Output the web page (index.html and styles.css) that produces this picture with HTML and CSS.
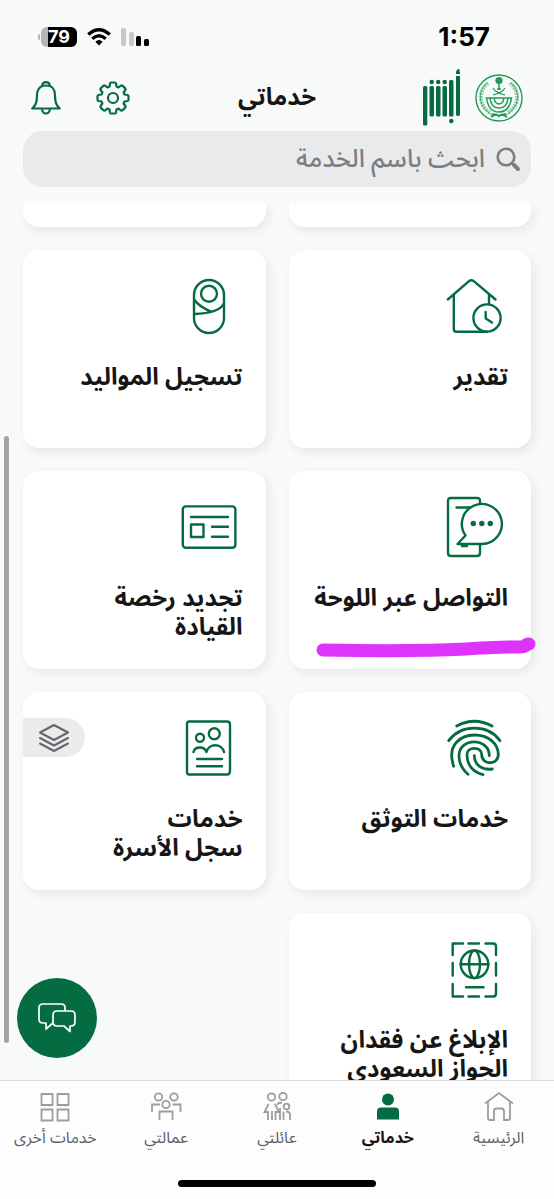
FILE: index.html
```html
<!DOCTYPE html>
<html lang="ar" dir="rtl">
<head>
<meta charset="utf-8">
<meta name="viewport" content="width=device-width, initial-scale=1">
<title>خدماتي</title>
<link rel="stylesheet" href="styles.css">
</head>
<body>
<div class="status">
  <span class="clock">1:57</span>
  <div class="status-icons">
    <svg width="28" height="18" viewBox="0 0 28 18" aria-hidden="true"><rect x="0" y="0" width="5" height="18" rx="2" fill="#c8c8c8"/><rect x="8" y="4" width="5" height="14" rx="2" fill="#c8c8c8"/><rect x="15" y="8" width="5" height="10" rx="1.500" fill="#000"/><rect x="23" y="11" width="5" height="7" rx="1.500" fill="#000"/></svg>
    <svg width="24" height="18" viewBox="0 0 24 18" fill="none" stroke="#000" stroke-width="3.400" aria-hidden="true"><path d="M1.300 6.600Q12-3.200 22.700 6.600M5.300 10.700Q12 4.700 18.700 10.700"/><path d="M8.300 13.700Q12 10.300 15.700 13.700L12 17.500z" fill="#000" stroke="none"/></svg>
    <div class="battery"><span>79</span></div>
  </div>
</div>
<header class="header">
  <div class="brand">
    <svg width="48" height="48" viewBox="0 0 48 48" fill="none" stroke="#1f9a58" aria-hidden="true">
      <circle cx="24" cy="24" r="23" stroke-width="1.400"/>
      <path d="M13 9C3 17 3 32 16 39M35 9c10 8 10 23-3 30" stroke-width="4" stroke="#8fceac" stroke-dasharray="2 1"/>
      <path d="M12 9C2 17 3 33 17 41M36 9c10 8 9 24-5 32" stroke-width=".8"/>
      <path d="M24 6v9M22 15h4" stroke-width="1.500"/><circle cx="24" cy="6.500" r="3.600" fill="#1f9a58" stroke="none"/>
      <path d="M18 14q3 5 12 7M30 14q-3 5-12 7" stroke-width="1.200"/>
      <path d="M11.500 24q2 14 12.500 14T36.500 24zM15 24q1 10 9 10t9-10M19 24q1 6 5 6t5-6" stroke-width="1.500"/>
      <path d="M16 43q5-4 8-1 3-3 8 1M17 40l5 1M31 40l-5 1" stroke-width="2"/>
    </svg>
    <svg width="38" height="58" viewBox="0 0 38 58" fill="#056c42" aria-hidden="true">
      <path d="M33 7h4v38.500q0 1.500-2 1.500t-2-1.500zM33 4q0-4 3.500-4 .5 1.500-.5 2.500h1V5h-4z"/>
      <rect x="26" y="11" width="4.500" height="36.500" rx="1.500"/><circle cx="28.300" cy="52" r="2.200"/>
      <rect x="19.500" y="17" width="4.500" height="30.500" rx="1.500"/><rect x="13" y="17" width="4.500" height="30.500" rx="1.500"/><rect x="6.500" y="17" width="4.500" height="30.500" rx="1.500"/><rect x="0" y="17" width="4.300" height="39.500" rx="1.500"/>
      <circle cx="8.700" cy="13" r="2.200"/><circle cx="15.200" cy="13" r="2.200"/><circle cx="21.700" cy="13" r="2.200"/>
    </svg>
  </div>
  <h1 class="page-title">خدماتي</h1>
  <div class="actions">
    <button class="icon-btn" aria-label="الإعدادات"><svg width="34" height="34" viewBox="0 0 34 34" fill="none" stroke="#056c42" stroke-width="2.200" stroke-linejoin="round"><circle cx="17" cy="17" r="5"/><path d="M13.500 5.500 14 2.500q.2-1 1.200-1h3.600q1 0 1.200 1l.5 3 2 .9 2.500-1.800q.8-.6 1.600.2l2.600 2.600q.8.800.2 1.600l-1.800 2.500.9 2 3 .5q1 .2 1 1.200v3.600q0 1-1 1.200l-3 .5-.9 2 1.800 2.500q.6.800-.2 1.600l-2.600 2.600q-.8.800-1.600.2l-2.500-1.800-2 .9-.5 3q-.2 1-1.200 1h-3.600q-1 0-1.200-1l-.5-3-2-.9L9 29.400q-.8.600-1.600-.2l-2.600-2.600q-.8-.8-.2-1.600l1.800-2.500-.9-2-3-.5q-1-.2-1-1.200v-3.600q0-1 1-1.200l3-.5.9-2L4.600 9q-.6-.8.200-1.600l2.600-2.600q.8-.8 1.600-.2l2.500 1.800z"/></svg></button>
    <button class="icon-btn" aria-label="التنبيهات"><svg width="30" height="34" viewBox="0 0 30 34" fill="none" stroke="#056c42" stroke-width="2.200" stroke-linejoin="round"><path d="M15 4.500C8.500 4.500 6 9 6 14c0 7-1 10-4.800 13.500h27.600C25 24 24 21 24 14c0-5-2.500-9.500-9-9.500z"/><path d="M11 5.200q.5-4 4-4t4 4M11 28q.5 4.500 4 4.500t4-4.500"/></svg></button>
  </div>
</header>
<label class="search">
  <svg width="24" height="24" viewBox="0 0 24 24" fill="none" stroke="#7c7e80" aria-hidden="true"><circle cx="10" cy="10" r="8.300" stroke-width="2.600"/><path d="M15.500 15.500 18 18" stroke-width="2.500"/><path d="M18 18l4 4" stroke-width="4" stroke-linecap="round"/></svg>
  <input type="search" placeholder="ابحث باسم الخدمة" aria-label="ابحث باسم الخدمة">
</label>
<main class="content">
  <div class="grid">
    <div class="card card-end"></div>
    <div class="card card-end"></div>

    <a class="card" href="#">
      <svg class="card-icon" viewBox="0 0 56 56"><path d="M.8 21.500 22 3.200q2.400-2 4.800 0L48.500 21.500M6.800 17v34q0 2.700 2.700 2.700H40M42 17v9"/><circle cx="40" cy="40" r="13.600"/><path d="M38.700 34v6.500l6.300 4"/></svg>
      <h2>تقدير</h2>
    </a>
    <a class="card" href="#">
      <svg class="card-icon" viewBox="0 0 56 56"><rect x="12" y="2" width="30" height="53" rx="15"/><circle cx="27" cy="15.700" r="8"/><path d="M12.500 22q4 6 16.500 11.700M41.500 26Q37 35 12.500 36"/></svg>
      <h2>تسجيل المواليد</h2>
    </a>
    <a class="card" href="#">
      <svg class="card-icon" viewBox="0 0 56 56"><path d="M33 4.500V2q0-3-3-3H4Q1-1 1 2v52q0 3 3 3h26q3 0 3-3v-9M9.500 8.500H23M15 47h5"/><path d="M18.500 36.500A20 20 0 1 1 35 45H10.500z"/><g class="dots"><circle cx="26.300" cy="24.500" r="2.700"/><circle cx="34.800" cy="24.500" r="2.700"/><circle cx="43.300" cy="24.500" r="2.700"/></g></svg>
      <h2>التواصل عبر اللوحة</h2>
      <svg class="marker" viewBox="0 0 220 20" aria-hidden="true"><path d="M7 13C60 14 110 14 150 12S185 10 200 10 207 7 213 7"/></svg>
    </a>
    <a class="card" href="#">
      <svg class="card-icon" viewBox="0 0 56 56"><rect x=".8" y="7.400" width="52.600" height="41.400" rx="3"/><path d="M9 18h37M30 27.800h16M30 37.700h16"/><rect x="9" y="25.500" width="12.500" height="12.500"/></svg>
      <h2>تجديد رخصة<br>القيادة</h2>
    </a>
    <a class="card" href="#">
      <svg class="card-icon finger" viewBox="0 0 56 56"><path d="M9.700 6Q27.300-3.500 45 6M1.700 20.700C14 4 41 4 53 20.700M6.700 46.300C-1 24 15 15 27.300 15 42 15 51.300 24 51.300 34.500c0 11-16.600 11-16.600 0 0-8.200-14.700-8.200-14.700 0C20 45 26 52.500 36 54.700M21 54.300C15 49 12 43 12 35.700c0-18.500 30.300-18.500 30.300 0M27.300 35.700C27.500 45 35 50.500 45.300 49"/></svg>
      <h2>خدمات التوثق</h2>
    </a>
    <a class="card" href="#">
      <svg class="card-icon" viewBox="0 0 56 56"><path d="M7 1.500h38q3 0 3 3V51q0 3.500-3 3.500H7Q5 54.500 5 52.500v-49Q5 1.500 7 1.500z"/><circle cx="18" cy="17.700" r="4"/><circle cx="32.300" cy="13.700" r="5.500"/><path d="M11.500 32c1.500-6 11-6 13 0 2-9 15.500-9 17.500 0M15 39h25M15 46.300h25"/></svg>
      <h2>خدمات<br>سجل الأسرة</h2>
      <span class="group-tag"><svg width="32" height="30" viewBox="0 0 32 30" fill="none" stroke="#65676a" stroke-width="2" stroke-linejoin="round" stroke-linecap="round" aria-hidden="true"><path d="M16 2 30 9.500 16 17 2 9.500zM2 15l14 7.500L30 15M2 20.500 16 28l14-7.500"/></svg></span>
    </a>
    <a class="card" href="#">
      <svg class="card-icon" viewBox="0 0 56 56"><path d="M5.700 14V2.500H16M21.500 2.500h10.500M38.500 2.500h7.500q3 0 3 3V14M5.700 22v12.500M49 22v12.500M5.700 43v12.500H16M21.500 55.500H32M38.500 55.500H46q3 0 3-3V43M19 46.300h17.500M13.500 23.300h28"/><circle cx="27.500" cy="23.300" r="13.800"/><ellipse cx="27.500" cy="23.300" rx="5.500" ry="13.800"/></svg>
      <h2>الإبلاغ عن فقدان<br>الجواز السعودي</h2>
    </a>
  </div>
  <div class="scroll-thumb"></div>
  <button class="chat" aria-label="المحادثة"><svg width="38" height="30" viewBox="0 0 38 30" fill="none" stroke="#fff" stroke-width="1.700" stroke-linejoin="round"><path d="M15.500 19.500 8 26v-6H5q-4 0-4-4V5q0-4 4-4h18q4 0 4 3.500V8"/><path d="M19 8h14q4 0 4 4v7q0 4-4 4h-1v5.500L26 23h-7q-4 0-4-4v-7q0-4 4-4z"/></svg></button>
</main>
<nav class="tabs">
  <a href="#"><svg viewBox="0 0 32 32"><path d="M2 12.500 16 2l14 10.500M5 10.500V27q0 2 2 2h4V20q0-2.500 2.500-2.500h5Q21 17.500 21 20v9h4q2 0 2-2V10.500"/></svg><span>الرئيسية</span></a>
  <a href="#" class="active" aria-current="page"><svg viewBox="0 0 32 32"><circle cx="16" cy="8.500" r="6"/><path d="M5 28.500v-8q0-4 4-4h14q4 0 4 4v8z"/></svg><span>خدماتي</span></a>
  <a href="#"><svg viewBox="0 0 32 32"><circle cx="10.500" cy="6" r="3.700"/><circle cx="22" cy="5.500" r="3.700"/><circle cx="25.500" cy="15.500" r="2.800"/><path d="M7 29v-8H3.500l4-8M11 20v9M14.500 29v-8H18L14 13M16 13.500q2-2 5-2M19 29V17M22.500 29v-8.500M25 20.500q4 0 4 3v5.500"/></svg><span>عائلتي</span></a>
  <a href="#"><svg viewBox="0 0 32 32"><circle cx="8.500" cy="6" r="3.700"/><circle cx="24" cy="6" r="3.700"/><circle cx="16" cy="13.500" r="3.700"/><path d="M2 21v-7.500h8M30.500 21v-7.500h-8M9.500 29v-8.500h13V29"/></svg><span>عمالتي</span></a>
  <a href="#"><svg viewBox="0 0 32 32"><path d="M2.500 3h11v11h-11zM18.500 3h11v11h-11zM2.500 18.500h11v11h-11zM18.500 18.500h11v11h-11z"/></svg><span>خدمات أخرى</span></a>
</nav>
<div class="home-bar"><i></i></div>
</body>
</html>
```
FILE: styles.css
```css
* { box-sizing: border-box; }
body {
  margin: 0;
  height: 100vh;
  display: flex;
  flex-direction: column;
  overflow: hidden;
  background: #f8f9f9;
  color: #161616;
  font-family: "Noto Sans Arabic", "Noto Sans", "DejaVu Sans", sans-serif;
}
a { color: inherit; text-decoration: none; }
button { border: 0; padding: 0; background: none; }
svg { display: block; flex: none; overflow: visible; }
h1, h2 { margin: 0; }

.status {
  display: flex;
  justify-content: space-between;
  align-items: center;
  flex: none;
  height: 69px;
  padding: 5px 64px 0 38px;
}
.clock { font: 700 26px/28px Inter, sans-serif; color: #000; }
.status-icons { display: flex; align-items: center; gap: 10px; }
.battery {
  position: relative;
  width: 36px;
  height: 20px;
  margin-inline-end: 3px;
  border-radius: 6px;
  background: linear-gradient(to right, #b5b5b5 7px, #000 7px);
  color: #fff;
  font: 700 18px/20px Inter, sans-serif;
  text-align: center;
}
.battery::after {
  content: "";
  position: absolute;
  left: -3px;
  top: 7px;
  width: 2px;
  height: 6px;
  border-radius: 2px 0 0 2px;
  background: #b5b5b5;
}

.header {
  display: grid;
  grid-template-columns: 1fr auto 1fr;
  align-items: center;
  flex: none;
  height: 58px;
  padding: 0 31px;
}
.brand { display: flex; align-items: center; gap: 14px; }
.page-title { font-size: 24px; line-height: 34px; font-weight: 700; }
.actions { display: flex; justify-content: flex-end; align-items: center; gap: 35px; }

.search {
  display: flex;
  align-items: center;
  gap: 11px;
  flex: none;
  height: 56px;
  margin: 4px 23px 16px;
  padding: 0 11px;
  border-radius: 20px;
  background: #e9eaeb;
}
.search input {
  flex: 1;
  min-width: 0;
  border: 0;
  padding: 0;
  outline: 0;
  background: none;
  font: 500 25px/36px "Noto Sans Arabic", "Noto Sans", "DejaVu Sans", sans-serif;
}
.search input::placeholder { color: #7c7e80; opacity: 1; }

.content { position: relative; flex: 1; min-height: 0; overflow: hidden; }
.grid {
  display: grid;
  grid-template-columns: 1fr 1fr;
  gap: 23px;
  padding: 0 23px;
}
.card {
  position: relative;
  display: flex;
  flex-direction: column;
  gap: 29px;
  min-height: 198px;
  padding: 28px 23px 24px;
  border-radius: 16px;
  background: #fff;
  box-shadow: 3px 4px 10px rgba(20, 40, 40, .08);
}
.card-end { min-height: 24px; padding: 0; border-radius: 0 0 16px 16px; }
.card-icon {
  width: 56px;
  height: 56px;
  margin-inline-start: 5px;
  fill: none;
  stroke: #056c42;
  stroke-width: 2.4;
  stroke-linecap: round;
  stroke-linejoin: round;
}
.finger { stroke-width: 2.8; }
.card-icon .dots { fill: #056c42; stroke: none; }
.card h2 { font-size: 24px; line-height: 29px; font-weight: 700; }
.marker {
  position: absolute;
  right: -5px;
  bottom: 12px;
  width: 220px;
  height: 20px;
  fill: none;
  stroke: #de33fa;
  stroke-width: 13;
  stroke-linecap: round;
}
.group-tag {
  position: absolute;
  left: 0;
  top: 26px;
  display: flex;
  align-items: center;
  justify-content: center;
  width: 62px;
  height: 39px;
  border-radius: 0 20px 20px 0;
  background: #e9ebed;
}
.scroll-thumb {
  position: absolute;
  left: 4px;
  top: 233px;
  bottom: 37px;
  width: 5px;
  border-radius: 3px;
  background: #a3a3a3;
}
.chat {
  position: absolute;
  left: 17px;
  bottom: 22px;
  display: grid;
  place-items: center;
  width: 80px;
  height: 80px;
  border-radius: 50%;
  background: #056c42;
}

.tabs {
  display: flex;
  flex: none;
  border-top: 1px solid #d9dadb;
  background: #fdfdfd;
  padding-top: 10px;
}
.tabs a {
  flex: 1 1 0;
  display: flex;
  flex-direction: column;
  align-items: center;
  gap: 3px;
  color: #5d6265;
  font-size: 16px;
  line-height: 24px;
  white-space: nowrap;
}
.tabs svg { width: 32px; height: 32px; fill: none; stroke: #9b9ea1; stroke-width: 1.8; }
.tabs .active { color: #161616; font-weight: 700; }
.tabs .active svg { fill: #056c42; stroke: none; }
.home-bar {
  display: flex;
  justify-content: center;
  flex: none;
  height: 49px;
  padding-top: 30px;
  background: #fdfdfd;
}
.home-bar i { width: 198px; height: 7px; border-radius: 4px; background: #000; }
```
